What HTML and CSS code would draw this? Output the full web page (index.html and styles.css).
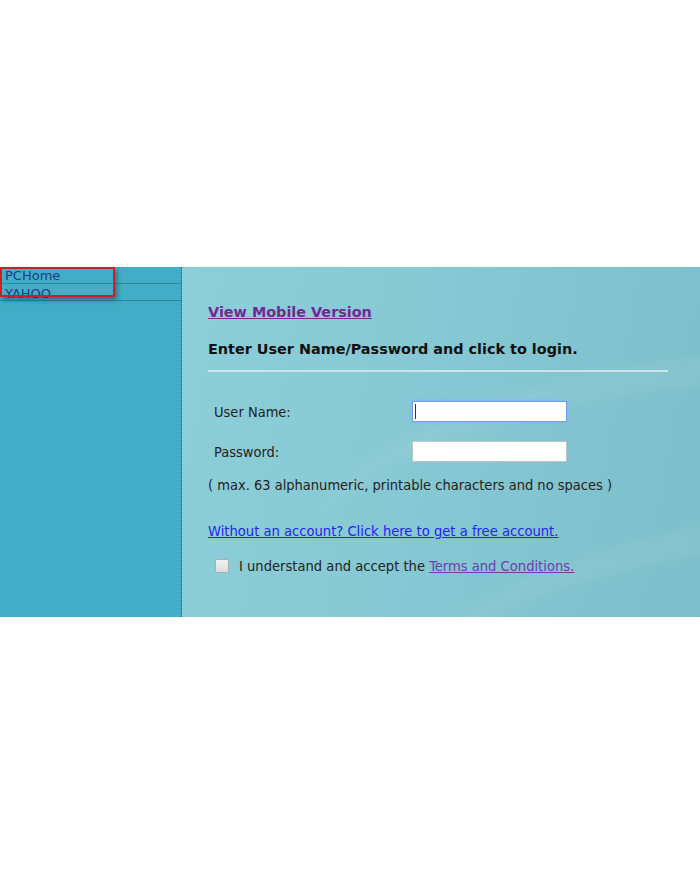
FILE: index.html
```html
<!DOCTYPE html>
<html>
<head>
<meta charset="utf-8">
<link rel="stylesheet" href="styles.css">
</head>
<body>
<div class="page">
  <div class="frame">
    <aside class="sidebar">
      <div class="nav">
        <div class="nav-row"><a class="nav-link">PCHome</a></div>
        <div class="nav-row"><a class="nav-link">YAHOO</a></div>
        <div class="highlight"></div>
      </div>
    </aside>
    <main class="main">
      <div class="swoosh s1"></div>
      <div class="swoosh s2"></div>
      <div class="content">
        <a class="mobile-link">View Mobile Version</a>
        <h1 class="title">Enter User Name/Password and click to login.</h1>
        <div class="rule"></div>
        <div class="form">
          <div class="field">
            <label class="label">User Name:</label>
            <span class="input-wrap">
              <input class="input focused" type="text">
              <span class="caret"></span>
            </span>
          </div>
          <div class="field">
            <label class="label">Password:</label>
            <span class="input-wrap">
              <input class="input" type="password">
            </span>
          </div>
          <p class="hint">( max. 63 alphanumeric, printable characters and no spaces )</p>
        </div>
        <a class="signup">Without an account? Click here to get a free account.</a>
        <div class="terms">
          <span class="checkbox"></span>
          <span class="terms-text">I understand and accept the <a class="terms-link">Terms and Conditions.</a></span>
        </div>
      </div>
    </main>
  </div>
</div>
</body>
</html>
```
FILE: styles.css
```css
html, body {
  margin: 0;
  padding: 0;
  background: #ffffff;
}
.page {
  width: 700px;
  height: 886px;
  padding-top: 267px;
  box-sizing: border-box;
}
.frame {
  display: flex;
  height: 350px;
}
.sidebar {
  width: 181px;
  background: #41adc6;
  border-right: 1px dotted #1f5f70;
  flex: none;
}
.nav {
  position: relative;
}
.nav-row {
  height: 16px;
  border-bottom: 1px solid #3288a0;
  overflow: hidden;
  padding-left: 5px;
  font-family: "DejaVu Sans", Verdana, sans-serif;
  font-size: 13px;
  line-height: 17px;
}
.nav-row + .nav-row {
  line-height: 20px;
}
.nav-link {
  color: #203a8c;
}
.highlight {
  position: absolute;
  left: 0;
  top: 0;
  width: 111px;
  height: 26px;
  border: 2px solid #cc1f26;
  box-shadow: 2px 3px 5px rgba(0, 40, 60, 0.45);
}
.main {
  flex: 1;
  position: relative;
  overflow: hidden;
  background: linear-gradient(100deg, #8dcfd9 0%, #86c8d3 45%, #7cbecb 100%);
}
.swoosh {
  position: absolute;
  border-radius: 50%;
  pointer-events: none;
}
.s1 {
  left: 120px;
  top: 90px;
  width: 800px;
  height: 300px;
  border-top: 30px solid rgba(255, 255, 255, 0.06);
  filter: blur(6px);
  transform: rotate(-6deg);
}
.s2 {
  left: 230px;
  top: 250px;
  width: 700px;
  height: 220px;
  border-top: 30px solid rgba(255, 255, 255, 0.06);
  filter: blur(6px);
  transform: rotate(-8deg);
}
.content {
  position: relative;
  padding: 35px 32px 0 26px;
  font-family: "DejaVu Sans Condensed", "DejaVu Sans", sans-serif;
  color: #1e2a2a;
}
.mobile-link {
  display: inline-block;
  font-family: "DejaVu Sans", Verdana, sans-serif;
  font-weight: bold;
  font-size: 14.4px;
  color: #6a2b98;
  text-decoration: underline;
}
.title {
  margin: 20px 0 0;
  font-family: "DejaVu Sans", Verdana, sans-serif;
  font-weight: bold;
  font-size: 14.4px;
  color: #111;
}
.rule {
  margin-top: 13px;
  height: 2px;
  background: #c9e5ea;
}
.form {
  margin-top: 29px;
}
.field {
  display: flex;
  align-items: center;
  height: 21px;
  margin-bottom: 19px;
}
.label {
  width: 198px;
  padding-left: 6px;
  font-size: 14.5px;
  color: #222;
}
.input-wrap {
  position: relative;
  display: block;
  width: 155px;
  height: 21px;
}
.input {
  display: block;
  width: 155px;
  height: 21px;
  box-sizing: border-box;
  border: 1px solid #b9c4c8;
  background: #fff;
  margin: 0;
  padding: 0 4px;
}
.input.focused {
  border: 1px solid #6f9fe6;
  box-shadow: 0 0 2px 1px #8ab4f0;
}
.caret {
  position: absolute;
  left: 3px;
  top: 3px;
  width: 1px;
  height: 15px;
  background: #333;
}
.hint {
  margin: -4px 0 0;
  font-size: 14.5px;
  color: #222;
}
.signup {
  display: inline-block;
  margin-top: 29px;
  font-size: 14.6px;
  color: #2424ee;
  text-decoration: underline;
}
.terms {
  display: flex;
  align-items: center;
  margin-top: 17px;
  padding-left: 7px;
  font-size: 14.6px;
}
.checkbox {
  width: 12px;
  height: 12px;
  border: 1px solid #a8b2b6;
  border-radius: 2px;
  background: linear-gradient(#f4f4f4, #dcdcdc);
  margin-right: 10px;
}
.terms-text {
  color: #222;
}
.terms-link {
  color: #6b3fa8;
  text-decoration: underline;
}
```
